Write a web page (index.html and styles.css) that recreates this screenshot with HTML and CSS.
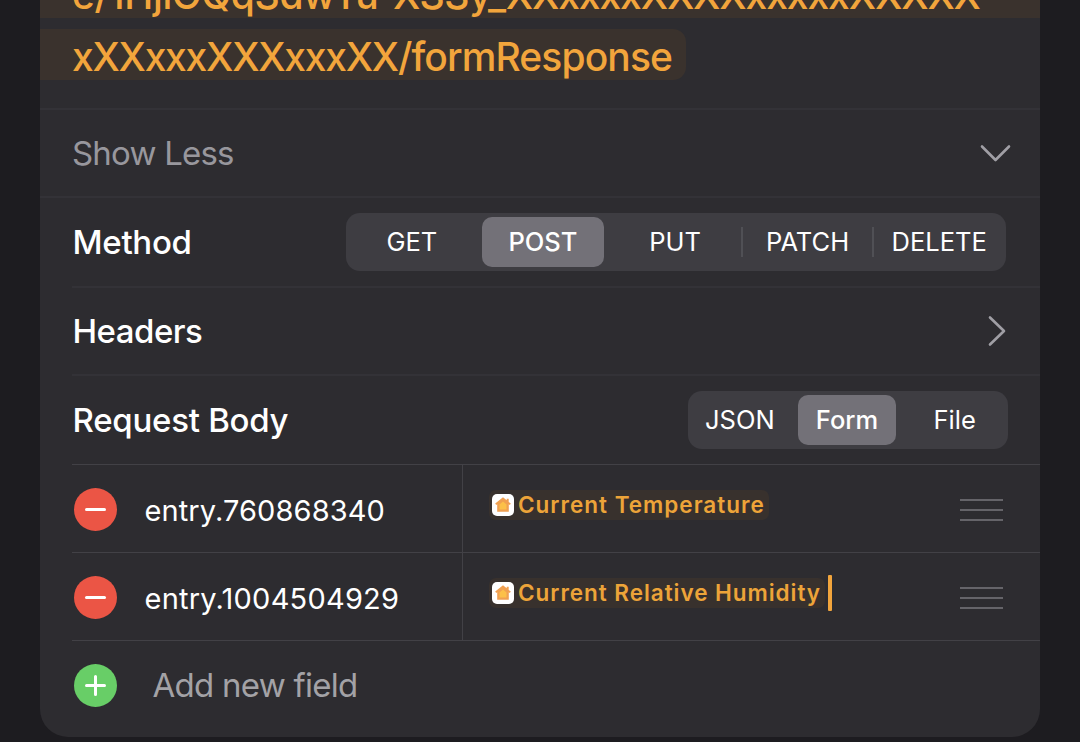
FILE: index.html
```html
<!DOCTYPE html>
<html lang="en">
<head>
<meta charset="utf-8">
<title>Get Contents of URL</title>
<link rel="stylesheet" href="styles.css">
</head>
<body>
<svg class="defs" width="0" height="0">
  <symbol id="home" viewBox="0 0 22 22">
    <rect width="22" height="22" rx="5" fill="#fff"/>
    <path d="M11 3.2 3.2 9.6l1 1.3 1-.7v7.500h11.600v-7.500l1 .7 1-1.300-2.100-1.700V4.700h-2v1.500z" fill="#f0a050"/>
    <path d="M11 7.500 7.500 10.400v5h7v-5z" fill="#fcc048"/>
  </symbol>
</svg>
<main class="card">
  <section class="url">
    <div class="url-line"><span class="u1">e/1HjlOQqSdwTu-XSSy_<span class="mask1">XXxxxxXXXXxxxxxXXXXX</span></span></div>
    <div class="url-line last"><span class="u2"><span class="mask2">xXXxxxXXXxxxXX</span>/formResponse</span></div>
  </section>
  <section class="row toggle">
    <span class="t-less">Show Less</span>
    <svg class="chev-down" width="32" height="20" viewBox="0 0 32 20"><path d="M3 3.500 16.500 17 30 3.500"/></svg>
  </section>
  <section class="row method">
    <span class="t-method">Method</span>
    <div class="seg seg-method">
      <span class="opt">GET</span><span class="opt on"><b>POST</b></span><span class="opt">PUT</span><span class="opt div">PATCH</span><span class="opt div">DELETE</span>
    </div>
  </section>
  <section class="row inset headers">
    <span class="t-headers">Headers</span>
    <svg class="chev-right" width="20" height="32" viewBox="0 0 20 32"><path d="M3 2.500 17 16 3 29.500"/></svg>
  </section>
  <section class="row inset">
    <span class="t-body">Request Body</span>
    <div class="seg seg-body">
      <span class="opt json">JSON</span><span class="opt on"><b>Form</b></span><span class="opt">File</span>
    </div>
  </section>
  <section class="field">
    <div class="key"><svg class="dot red" width="43" height="43" viewBox="0 0 43 43"><circle cx="21.500" cy="21.500" r="21.500"/><path d="M12.500 21.500h18"/></svg><span class="k1">entry.760868340</span></div>
    <div class="value"><span class="token"><svg width="22" height="22"><use href="#home"/></svg><span class="v1">Current Temperature</span></span><i class="grip"></i></div>
  </section>
  <section class="field">
    <div class="key"><svg class="dot red" width="43" height="43" viewBox="0 0 43 43"><circle cx="21.500" cy="21.500" r="21.500"/><path d="M12.500 21.500h18"/></svg><span class="k2">entry.1004504929</span></div>
    <div class="value"><span class="token"><svg width="22" height="22"><use href="#home"/></svg><span class="v2">Current Relative Humidity</span></span><i class="caret"></i><i class="grip"></i></div>
  </section>
  <section class="add">
    <svg class="dot green" width="43" height="43" viewBox="0 0 43 43"><circle cx="21.500" cy="21.500" r="21.500"/><path d="M12.500 21.500h18M21.500 12.500v18"/></svg>
    <span class="t-add">Add new field</span>
  </section>
</main>
</body>
</html>
```
FILE: styles.css
```css
* { box-sizing: border-box; }
body { margin: 0; height: 742px; overflow: hidden; background: #1d1c20; font-family: Inter, "Liberation Sans", sans-serif; color: #fff; }
.defs { display: block; height: 0; }
.card { width: 1000px; height: 737px; margin: 0 40px; background: #2d2c30; border-radius: 0 0 28px 28px; overflow: hidden; white-space: nowrap; }
.url { height: 108px; display: flex; flex-direction: column; justify-content: flex-end; gap: 11px; padding-bottom: 28px; color: #f2a53c; font-size: 39px; font-weight: 450; line-height: 51px; }
.url-line { height: 51px; flex: none; padding: 2px 0 0 32px; background: #3a322d; }
.url-line.last { width: 646px; border-radius: 0 13px 13px 0; }
.u1 { letter-spacing: -0.4px; }
.mask1 { letter-spacing: -1.1px; }
.u2 { letter-spacing: -0.88px; }
.mask2 { letter-spacing: -1.25px; }
.row { display: flex; align-items: center; justify-content: space-between; height: 90px; margin-left: 32px; border-top: 2px solid #333237; font-size: 33px; font-weight: 500; }
.toggle { height: 88px; margin-left: 0; padding: 0 29px 0 32px; font-weight: 400; color: #98979d; }
.t-less { letter-spacing: -0.8px; padding-bottom: 1px; }
.method { margin-left: 0; padding: 0 34px 0 32.500px; }
.t-method { letter-spacing: -0.3px; }
.inset { padding: 0 32px 0 0.500px; }
.headers { height: 88px; padding-right: 33px; }
.t-headers { letter-spacing: -0.5px; padding-bottom: 1px; }
.t-body { letter-spacing: -0.26px; padding-bottom: 1px; }
.chev-down, .chev-right { fill: none; stroke: #a09fa5; stroke-width: 2.600px; stroke-linecap: round; stroke-linejoin: round; }
.seg { display: grid; height: 58px; background: #3e3d42; border-radius: 14px; font-size: 25.500px; font-weight: 400; }
.seg-method { width: 660px; grid-template-columns: repeat(5, minmax(0, 1fr)); padding: 4px 2px 4px 0; }
.seg-body { width: 320px; grid-template-columns: repeat(3, minmax(0, 1fr)); padding: 4px 0; }
.opt { display: flex; align-items: center; justify-content: center; padding-bottom: 1px; }
.json { padding-right: 3px; }
.seg-method .on { padding: 0 5px 0 4px; }
.seg-body .on { padding: 0 5px 0 3px; }
.on b { flex: 1; height: 50px; line-height: 50px; text-align: center; background: #737178; border-radius: 10px; font-weight: 500; }
.div::before { content: ""; width: 2px; height: 30px; margin-right: auto; background: #505055; }
.div::after { content: ""; margin-left: auto; }
.field { display: grid; grid-template-columns: 390px 1fr; height: 88px; margin-left: 32px; border-top: 1px solid #424146; }
.key { display: flex; align-items: center; padding: 2px 0 0 2px; gap: 27.500px; font-size: 29px; }
.k1 { letter-spacing: 0.1px; padding-top: 2px; }
.k2 { letter-spacing: 0.22px; padding-top: 2px; }
.value { display: flex; align-items: center; border-left: 1px solid #424146; padding: 0 37px 0 26px; }
.token { display: flex; align-items: center; height: 30px; gap: 4px; padding: 0 4px 0 3px; margin-bottom: 8px; border-radius: 7px; background: #38312d; color: #eda439; font-size: 22.500px; font-weight: 600; }
.v1 { letter-spacing: 1px; }
.v2 { letter-spacing: 0.96px; }
.caret { width: 4px; height: 36px; margin: 0 0 8px 3px; background: #f2a53c; border-radius: 1px; }
.grip { width: 43px; height: 22px; margin: 3px 0 0 auto; border: solid #656469; border-width: 2.500px 0; background: linear-gradient(#656469, #656469) center / 100% 2px no-repeat; }
.dot { flex: none; fill: none; stroke: #fff; stroke-width: 3px; stroke-linecap: round; }
.dot circle { stroke: none; }
.red circle { fill: #eb5545; }
.green circle { fill: #68ce67; }
.add { display: flex; align-items: center; gap: 35.500px; height: 90px; margin-left: 32px; padding-left: 2px; border-top: 1px solid #424146; font-size: 33px; color: #a3a2a6; }
.t-add { letter-spacing: -0.73px; padding-bottom: 1px; }
```
